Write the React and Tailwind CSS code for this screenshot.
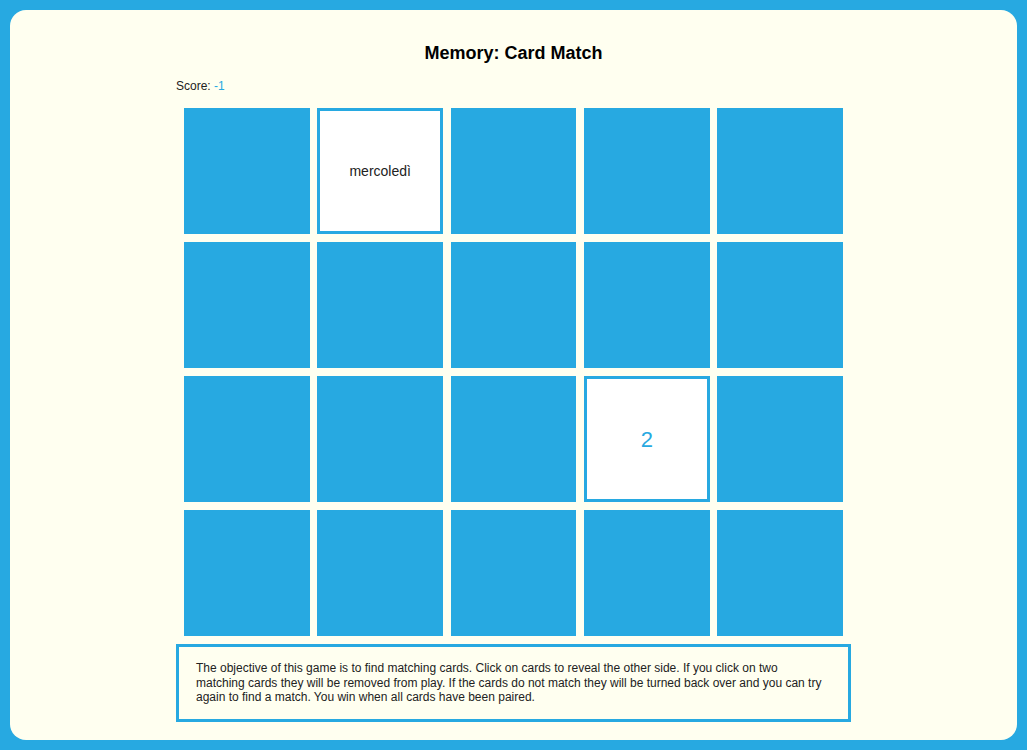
const cards = [
  null, { text: 'mercoledì', kind: 'word' }, null, null, null,
  null, null, null, null, null,
  null, null, null, { text: '2', kind: 'num' }, null,
  null, null, null, null, null,
]

function Card({ card }) {
  if (!card) return <div className="h-[126px] bg-[#27a9e1]" />
  return (
    <div className="h-[126px] bg-white border-[3px] border-[#27a9e1] flex items-center justify-center">
      {card.kind === 'word'
        ? <span className="text-[14px] text-[#222]">{card.text}</span>
        : <span className="text-[22px] text-[#27a9e1]">{card.text}</span>}
    </div>
  )
}

export default function App() {
  return (
    <div className="min-h-[750px] bg-[#27a9e1] p-[10px] font-['Liberation_Sans',Arial,sans-serif]">
      <div className="h-[730px] rounded-[16px] bg-[#fffff0] pt-[32px]">
        <h1 className="text-center text-[18px] leading-[22px] font-bold text-black">Memory: Card Match</h1>

        <div className="w-[675px] mx-auto">
          <p className="mt-[15px] text-[12px] leading-[14px] text-[#222]">
            Score: <span className="text-[#27a9e1]">-1</span>
          </p>

          {/* Board */}
          <div className="mt-[15px] px-[8px] grid grid-cols-5 gap-x-[7.5px] gap-y-[8px]">
            {cards.map((c, i) => <Card key={i} card={c} />)}
          </div>

          {/* Rules */}
          <div className="mt-[8px] h-[78px] border-[3px] border-[#27a9e1] pl-[17px] pr-[20px] pt-[14px] text-[12px] leading-[14.5px] text-[#222]">
            The objective of this game is to find matching cards. Click on cards to reveal the other side. If you click on two matching cards they will be removed from play. If the cards do not match they will be turned back over and you can try again to find a match. You win when all cards have been paired.
          </div>
        </div>
      </div>
    </div>
  )
}
